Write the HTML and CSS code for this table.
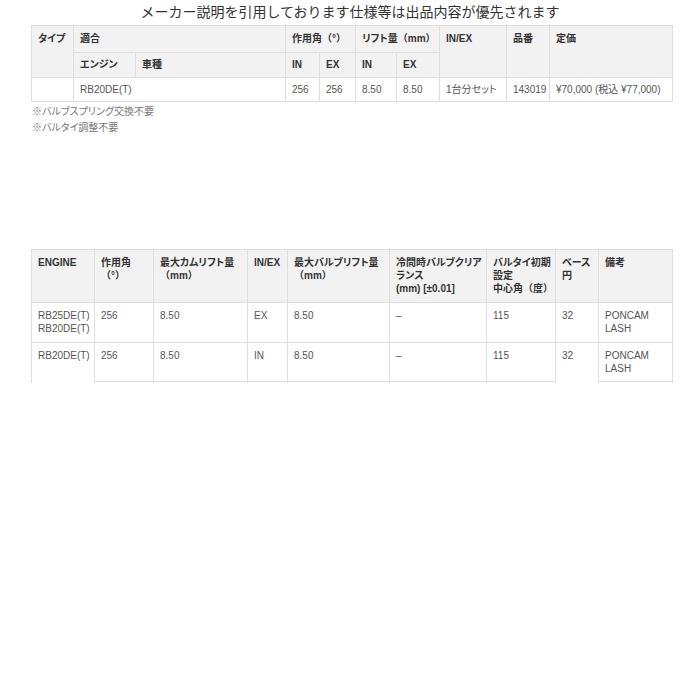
FILE: index.html
```html
<!DOCTYPE html>
<html lang="ja">
<head>
<meta charset="utf-8">
<title>仕様</title>
<link rel="stylesheet" href="styles.css">
</head>
<body>
<h1 class="title">メーカー説明を引用しております仕様等は出品内容が優先されます</h1>

<table class="spec t1">
  <colgroup>
    <col class="w42"><col class="w62"><col class="w150"><col class="w34"><col class="w36"><col class="w41"><col class="w43"><col class="w67"><col class="w43"><col class="w123">
  </colgroup>
  <tr class="r1">
    <th rowspan="2">タイプ</th>
    <th colspan="2">適合</th>
    <th colspan="2">作用角<span class="np">（°）</span></th>
    <th colspan="2">リフト量<span class="np">（mm）</span></th>
    <th rowspan="2">IN/EX</th>
    <th rowspan="2">品番</th>
    <th rowspan="2">定価</th>
  </tr>
  <tr class="r2">
    <th>エンジン</th>
    <th>車種</th>
    <th>IN</th>
    <th>EX</th>
    <th>IN</th>
    <th>EX</th>
  </tr>
  <tr class="r3">
    <td></td>
    <td colspan="2">RB20DE(T)</td>
    <td>256</td>
    <td>256</td>
    <td>8.50</td>
    <td>8.50</td>
    <td>1台分セット</td>
    <td>143019</td>
    <td>¥70,000 (税込 ¥77,000)</td>
  </tr>
</table>

<div class="notes">
  <p>※バルブスプリング交換不要</p>
  <p>※バルタイ調整不要</p>
</div>

<div class="clip">
<table class="spec t2">
  <colgroup>
    <col class="w63"><col class="w59"><col class="w94"><col class="w40"><col class="w102"><col class="w97"><col class="w69"><col class="w43"><col class="w74">
  </colgroup>
  <tr class="h">
    <th>ENGINE</th>
    <th>作用角<br><span class="np">（°）</span></th>
    <th>最大カムリフト量<br><span class="np">（mm）</span></th>
    <th>IN/EX</th>
    <th>最大バルブリフト量<br><span class="np">（mm）</span></th>
    <th>冷間時バルブクリア<br>ランス<br>(mm) [±0.01]</th>
    <th>バルタイ初期<br>設定<br>中心角<span class="np">（度）</span></th>
    <th>ベース<br>円</th>
    <th>備考</th>
  </tr>
  <tr class="d1">
    <td>RB25DE(T)<br>RB20DE(T)</td>
    <td>256</td>
    <td>8.50</td>
    <td>EX</td>
    <td>8.50</td>
    <td>–</td>
    <td>115</td>
    <td>32</td>
    <td>PONCAM<br>LASH</td>
  </tr>
  <tr class="d2">
    <td rowspan="2">RB20DE(T)</td>
    <td>256</td>
    <td>8.50</td>
    <td>IN</td>
    <td>8.50</td>
    <td>–</td>
    <td>115</td>
    <td rowspan="2">32</td>
    <td>PONCAM<br>LASH</td>
  </tr>
  <tr class="d3">
    <td></td>
    <td></td>
    <td></td>
    <td></td>
    <td></td>
    <td></td>
    <td></td>
  </tr>
</table>
</div>
</body>
</html>
```

FILE: styles.css
```css
body {
  margin: 0;
  font-family: "Liberation Sans", "Noto Sans CJK JP", sans-serif;
  color: #333;
  background: #fff;
}

.title {
  margin: 0 0 3px;
  height: 22px;
  line-height: 22px;
  font-size: 14px;
  font-weight: normal;
  text-align: center;
  color: #333;
  font-family: "Noto Sans CJK JP", sans-serif;
}

.spec {
  border-collapse: collapse;
  table-layout: fixed;
  width: 641px;
  margin-left: 31px;
  font-size: 10px;
  line-height: 13px;
  font-feature-settings: "palt";
}

.spec th,
.spec td {
  border: 1px solid #dedede;
  padding: 6px 6px;
  text-align: left;
  vertical-align: top;
  white-space: nowrap;
  overflow: hidden;
}

.spec th {
  background: #f2f2f2;
  color: #333;
  font-weight: bold;
}

.spec td {
  color: #555;
  font-weight: normal;
}

.np {
  font-feature-settings: normal;
}

.t1 .r1 th { padding-top: 6px; padding-bottom: 7px; }
.t1 .r2 th { padding-top: 5px; padding-bottom: 6px; }
.t1 .r3 td { padding-top: 5px; padding-bottom: 5px; }

.t2 .h th { padding-top: 6px; padding-bottom: 7px; }
.t2 .d1 td { padding-top: 6px; padding-bottom: 7px; }
.t2 .d2 td { padding-top: 6px; padding-bottom: 6px; }
.t2 .d3 td { height: 26px; }

.w34 { width: 34px; }
.w36 { width: 36px; }
.w40 { width: 40px; }
.w41 { width: 41px; }
.w42 { width: 42px; }
.w43 { width: 43px; }
.w59 { width: 59px; }
.w62 { width: 62px; }
.w63 { width: 63px; }
.w67 { width: 67px; }
.w69 { width: 69px; }
.w74 { width: 74px; }
.w94 { width: 94px; }
.w97 { width: 97px; }
.w102 { width: 102px; }
.w123 { width: 123px; }
.w150 { width: 150px; }

.notes {
  margin: 2px 0 0 32px;
  font-size: 10px;
  line-height: 16px;
  color: #777;
  font-feature-settings: "palt";
}

.notes p {
  margin: 0;
}

.clip {
  margin-top: 113px;
  height: 134px;
  overflow: hidden;
}
```
